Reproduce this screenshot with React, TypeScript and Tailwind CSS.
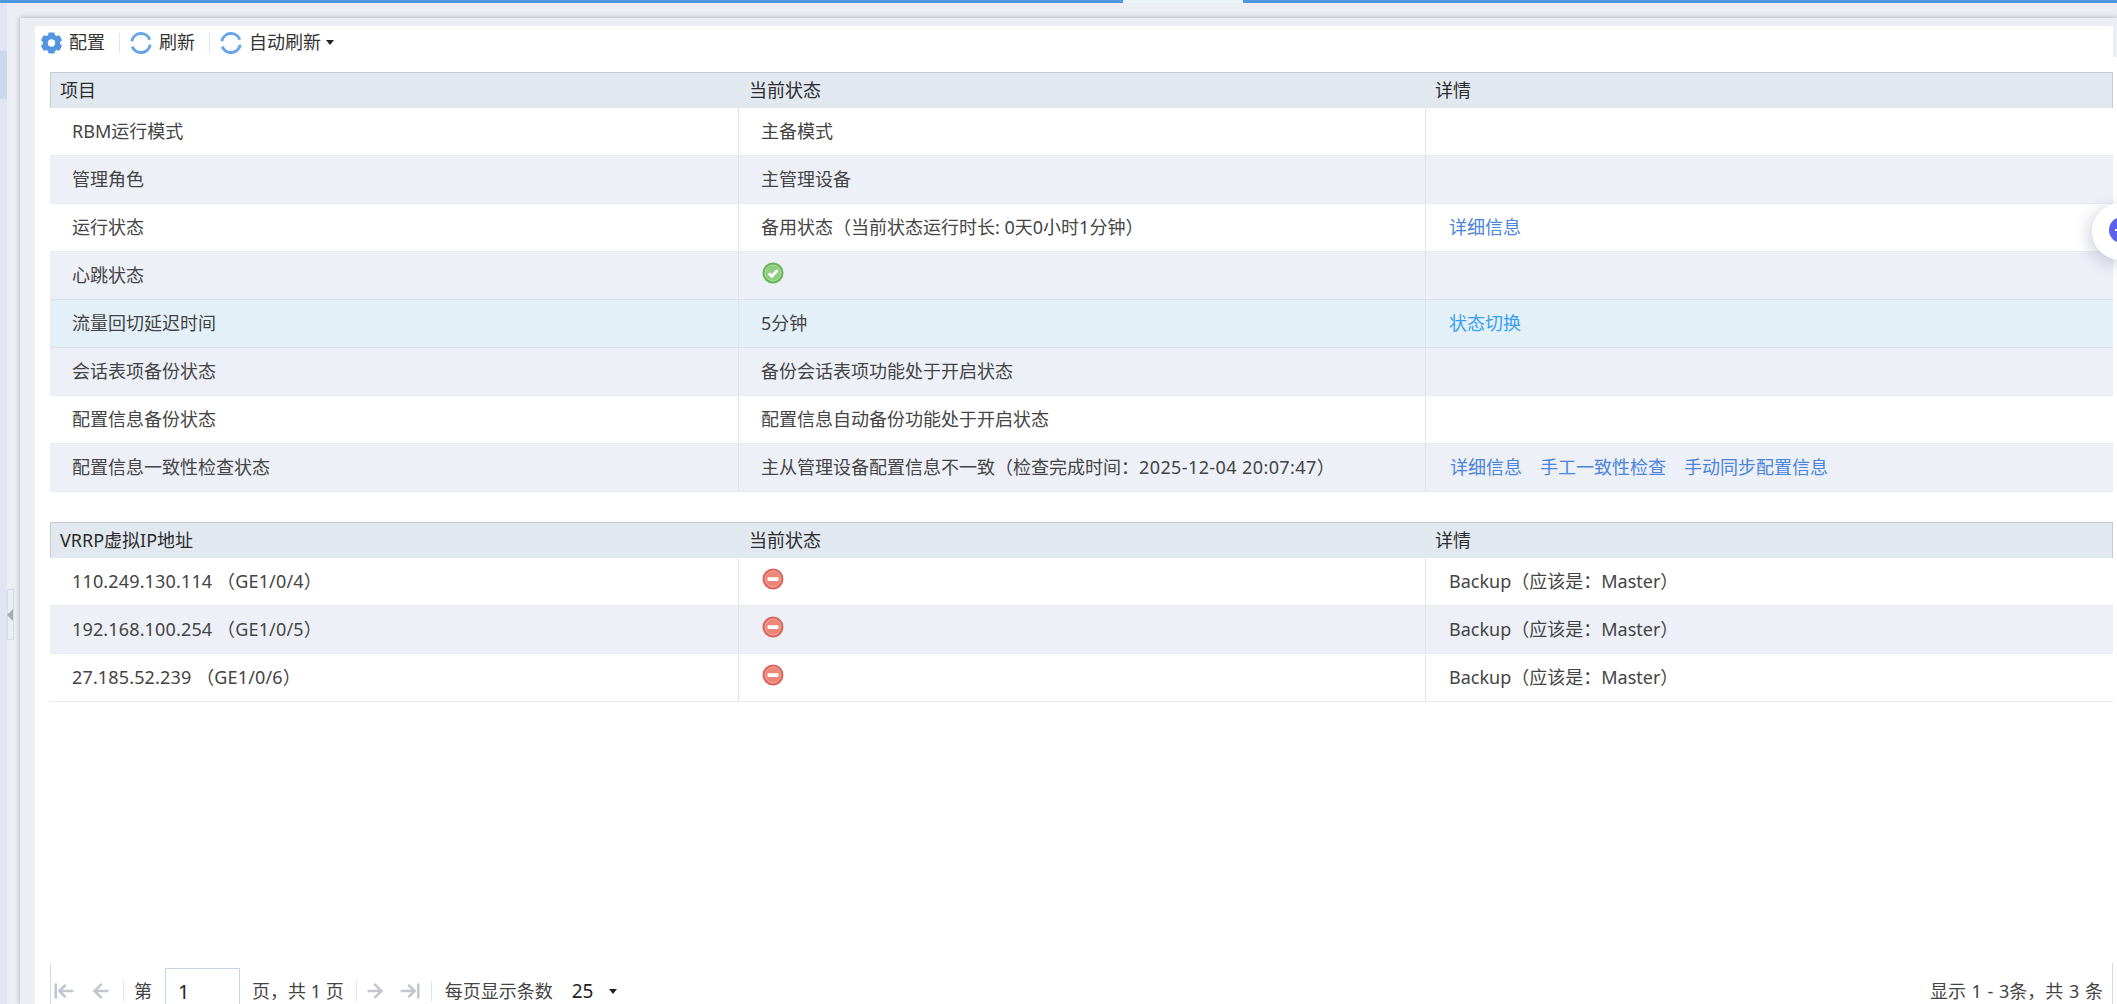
import { ArrowLeft, ArrowLeftToLine, ArrowRight, ArrowRightToLine } from "lucide-react";

function Gear() {
  const teeth = [0, 60, 120, 180, 240, 300];
  return (
    <svg width="23" height="24" viewBox="0 0 23 24" className="shrink-0">
      <circle cx="11.5" cy="12" r="6.2" fill="none" stroke="#5295e0" strokeWidth="5" />
      {teeth.map((a) => (
        <rect key={a} x="8.2" y="1.4" width="6.6" height="5" rx="1.4" fill="#5295e0" transform={`rotate(${a} 11.5 12)`} />
      ))}
    </svg>
  );
}

function Refresh() {
  return (
    <svg width="22" height="22" viewBox="0 0 22 22" className="shrink-0">
      <path d="M1.8 9.2A9.4 9.4 0 0 1 19.8 7.6" fill="none" stroke="#68a5e8" strokeWidth="3" />
      <path d="M20.2 12.8A9.4 9.4 0 0 1 2.2 14.6" fill="none" stroke="#68a5e8" strokeWidth="3" />
    </svg>
  );
}

function Caret() {
  return <span className="w-0 h-0 border-x-[4px] border-x-transparent border-t-[5px] border-t-[#222]" />;
}

function OkIcon() {
  return (
    <svg width="22" height="22" viewBox="0 0 22 22" className="mb-[5px] ml-px block">
      <circle cx="11" cy="11" r="10.5" fill="#66b557" />
      <circle cx="11" cy="11" r="8" fill="#8fce80" stroke="#acdca2" strokeWidth="1" />
      <path d="M6.8 11.2l3 3 5.6-5.8" fill="none" stroke="#ffffff" strokeWidth="3" />
    </svg>
  );
}

function StopIcon() {
  return (
    <svg width="22" height="22" viewBox="0 0 22 22" className="mb-[6px] ml-px block">
      <circle cx="11" cy="11" r="10.5" fill="#d9675c" />
      <circle cx="11" cy="11" r="8" fill="#ef8478" stroke="#f3a89e" strokeWidth="1" />
      <rect x="5.5" y="9.2" width="11" height="3.8" rx="1" fill="#ffffff" />
    </svg>
  );
}

const cellBorder = "border-l border-[#e3e4e8]";

function Row({
  a,
  b,
  c,
  bg,
  line = "border-[#e9ebf0]",
}: {
  a: React.ReactNode;
  b: React.ReactNode;
  c?: React.ReactNode;
  bg: string;
  line?: string;
}) {
  return (
    <div className={`grid grid-cols-[688px_687px_1fr] h-12 border-b ${line} ${bg} text-[#444]`}>
      <div className="flex items-center pl-[22px] whitespace-pre">{a}</div>
      <div className={`flex items-center pl-[22px] ${cellBorder}`}>{b}</div>
      <div className={`flex items-center pl-[23px] ${cellBorder}`}>{c}</div>
    </div>
  );
}

function Header({ first }: { first: string }) {
  return (
    <div className="grid grid-cols-[688px_687px_1fr] h-9 bg-[#e2e8f0] border-t border-x border-t-[#c8c9cb] border-x-[#c8c9cb] text-[#2b2b2b]">
      <div className="flex items-center pl-[9px]">{first}</div>
      <div className="flex items-center pl-[10px]">当前状态</div>
      <div className="flex items-center pl-[9px]">详情</div>
    </div>
  );
}

const link = "text-[#4a84dd]";

function Sep() {
  return <span className="block w-px h-[20px] bg-[#e4e4e4] shrink-0" />;
}

function Addr({ text }: { text: string }) {
  return <span className="tracking-[0.15px]">{text}</span>;
}

export default function App() {
  const tint = "bg-[#edf0f7]";
  return (
    <div className="relative w-[2117px] h-[1004px] overflow-hidden flex flex-col bg-[#eceef4] text-[18px] font-['Noto_Sans','Noto_Sans_CJK_SC',sans-serif]">
      <div className="flex h-[3px] shrink-0">
        <div className="w-[1123px] bg-[#4f96e3]" />
        <div className="w-[120px] bg-[#ebf3fd]" />
        <div className="flex-1 bg-[#4f96e3]" />
      </div>
      <div className="flex flex-1 min-h-0">
        <div className="w-[7px] shrink-0 bg-[#dfe5f2] pt-[48px]">
          <div className="h-[48px] bg-[#c5d8f0]" />
        </div>
        <div className="w-[13px] shrink-0 pt-[586px]">
          <div className="w-[7px] h-[51px] border border-[#d6daea] flex items-center justify-end">
            <span className="w-0 h-0 border-y-[6px] border-y-transparent border-r-[6px] border-r-[#a9abb0]" />
          </div>
        </div>
        <div className="flex-1 min-w-0 mt-[15px] flex pl-[15px] pt-2 bg-[#eceef4] shadow-[0_0_5px_rgba(0,0,0,0.3)]">
          <div className="flex-1 min-w-0 bg-white flex flex-col overflow-hidden">
            <div className="h-[46px] pb-[13px] shrink-0 flex items-center text-[#333]">
              <div className="ml-[5px] mr-[6px]">
                <Gear />
              </div>
              <span className="w-[50px] -mt-px">配置</span>
              <Sep />
              <div className="ml-[10px] mr-[7px]">
                <Refresh />
              </div>
              <span className="w-[50px] -mt-px">刷新</span>
              <Sep />
              <div className="ml-[10px] mr-[7px]">
                <Refresh />
              </div>
              <span className="-mt-px mr-[5px]">自动刷新</span>
              <Caret />
            </div>

            <div className="ml-[15px]">
              <Header first="项目" />
              <Row bg="bg-white" a="RBM运行模式" b="主备模式" />
              <Row bg={tint} a="管理角色" b="主管理设备" />
              <Row
                bg="bg-white"
                a="运行状态"
                b="备用状态（当前状态运行时长: 0天0小时1分钟）"
                c={<span className={link}>详细信息</span>}
              />
              <Row bg={tint} line="border-[#dcdfe6]" a="心跳状态" b={<OkIcon />} />
              <Row
                bg="bg-[#e3f0f8]"
                line="border-[#dcdfe6]"
                a="流量回切延迟时间"
                b="5分钟"
                c={<span className="text-[#35a0ee]">状态切换</span>}
              />
              <Row bg={tint} a="会话表项备份状态" b="备份会话表项功能处于开启状态" />
              <Row bg="bg-white" a="配置信息备份状态" b="配置信息自动备份功能处于开启状态" />
              <Row
                bg={tint}
                a="配置信息一致性检查状态"
                b={
                  <span>
                    主从管理设备配置信息不一致（检查完成时间：
                    <span className="tracking-[0.4px]">2025-12-04 20:07:47</span>）
                  </span>
                }
                c={
                  <div className={`flex gap-[18px] ml-px ${link}`}>
                    <span>详细信息</span>
                    <span>手工一致性检查</span>
                    <span>手动同步配置信息</span>
                  </div>
                }
              />

              <div className="mt-[30px]">
                <Header first="VRRP虚拟IP地址" />
                <Row bg="bg-white" a={<Addr text="110.249.130.114 （GE1/0/4）" />} b={<StopIcon />} c="Backup（应该是：Master）" />
                <Row bg={tint} a={<Addr text="192.168.100.254 （GE1/0/5）" />} b={<StopIcon />} c="Backup（应该是：Master）" />
                <Row bg="bg-white" a={<Addr text="27.185.52.239 （GE1/0/6）" />} b={<StopIcon />} c="Backup（应该是：Master）" />
              </div>

              <div className="mt-[261px] h-[56px] shrink-0 flex items-center border-x border-[#d3d9e6] text-[#444]">
                <div className="ml-[2px] flex items-center gap-[15px] text-[#c2c6ce]">
                  <ArrowLeftToLine size={22} strokeWidth={2.8} />
                  <ArrowLeft size={22} strokeWidth={2.8} />
                </div>
                <div className="ml-[11px] mr-[10px]">
                  <Sep />
                </div>
                <span>第</span>
                <input
                  readOnly
                  value="1"
                  className="ml-[13px] w-[75px] h-[46px] pl-3 border border-[#c5d5e5] bg-white text-[#222] text-[20px] outline-none"
                />
                <span className="ml-[12px]">页，共 1 页</span>
                <div className="ml-[12px] mr-[7px]">
                  <Sep />
                </div>
                <div className="flex items-center gap-[13px] text-[#c2c6ce]">
                  <ArrowRight size={22} strokeWidth={2.8} />
                  <ArrowRightToLine size={22} strokeWidth={2.8} />
                </div>
                <div className="ml-[10px] mr-[13px]">
                  <Sep />
                </div>
                <span>每页显示条数</span>
                <span className="ml-[19px] text-[#222] text-[19px]">25</span>
                <span className="ml-[16px] flex">
                  <Caret />
                </span>
                <span className="ml-auto mr-[9px] [word-spacing:1px]">显示 1 - 3条，共 3 条</span>
              </div>
            </div>
          </div>
          <div className="w-1 shrink-0 bg-white">
            <div className="h-[31px] bg-[#eceef3]" />
          </div>
        </div>
      </div>
      <div className="absolute left-[2092px] top-[203px] w-[57px] h-[57px] rounded-full bg-white shadow-[-4px_4px_16px_rgba(60,70,100,0.22)] flex items-center">
        <div className="ml-[17px] -mt-[3px] w-[26px] h-[26px] rounded-full bg-[#5b60ee] flex items-center pl-[6px]">
          <span className="w-[6px] h-[2px] bg-white" />
        </div>
      </div>
    </div>
  );
}
